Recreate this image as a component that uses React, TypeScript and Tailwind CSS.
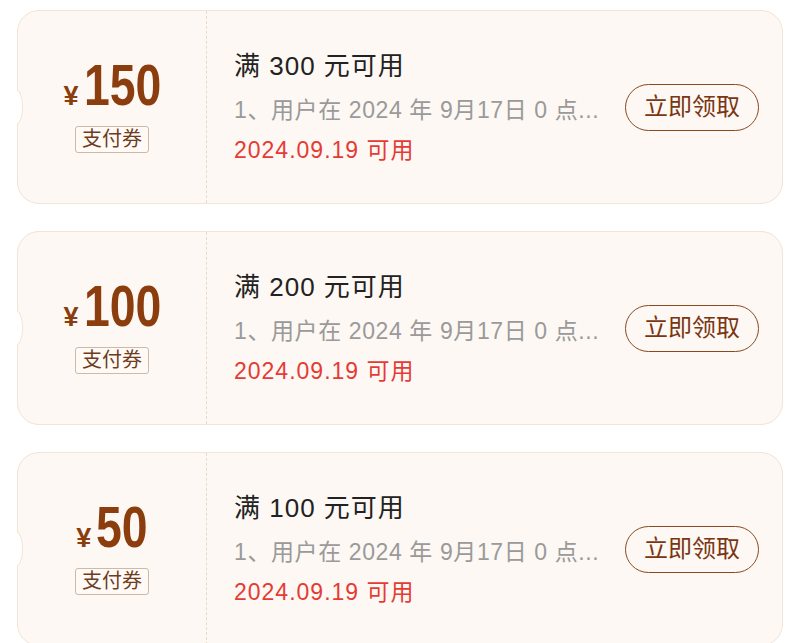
import React from 'react'

interface Coupon {
  amount: string
  threshold: string
}

const coupons: Coupon[] = [
  { amount: '150', threshold: '300' },
  { amount: '100', threshold: '200' },
  { amount: '50', threshold: '100' },
]

const font = 'font-["Liberation_Sans","Noto_Sans_CJK_SC",sans-serif]'

const CouponCard: React.FC<{ coupon: Coupon }> = ({ coupon }) => {
  const narrow = coupon.amount.length === 2
  return (
    <div className="relative flex h-[194px] shrink-0 rounded-[22px] border border-[#f2e4d6] bg-[#fdf8f3]">
      {/* Left notch */}
      <div className="absolute left-[-1px] top-1/2 h-[34px] w-[6px] -translate-y-1/2 rounded-tr-[6px_17px] rounded-br-[6px_17px] border border-l-0 border-[#f2e4d6] bg-white" />

      {/* Amount */}
      <div className="flex w-[188px] shrink-0 flex-col items-center justify-center pb-[6px]">
        <div className="flex items-baseline text-[#8b3d0e]">
          <span className="mr-[5px] text-[27px] font-bold leading-none">¥</span>
          <span
            className={`inline-block origin-left scale-x-[0.8] text-[58px] font-bold leading-none ${
              narrow ? 'mr-[-13px]' : 'mr-[-20px]'
            }`}
          >
            {coupon.amount}
          </span>
        </div>
        <span className="mt-[12px] rounded-[3px] border border-[#cdb9a6] bg-[#fffaf6] px-[6px] text-[20px] leading-[25px] text-[#6e3d1e]">
          支付券
        </span>
      </div>

      {/* Divider */}
      <div className="border-l border-dashed border-[#e9d9c7]" />

      {/* Details */}
      <div className="flex flex-1 items-center pl-[27px] pr-[23px]">
        <div className="flex-1 min-w-0">
          <p className="text-[26px] leading-[34px] tracking-[1px] text-[#222]">
            满 {coupon.threshold} 元可用
          </p>
          <p className="mt-[11px] whitespace-nowrap text-[23px] leading-[32px] tracking-[0.6px] text-[#9a9a9a]">
            1、用户在 2024 年 9月17日 0 点...
          </p>
          <p className="mt-[8px] text-[23px] leading-[32px] tracking-[1px] text-[#e53b35]">
            2024.09.19 可用
          </p>
        </div>
        <button
          type="button"
          className="flex h-[47px] w-[134px] shrink-0 items-center justify-center rounded-full border-[1.5px] border-[#8a4a20] text-[24px] text-[#7a3612]"
        >
          立即领取
        </button>
      </div>
    </div>
  )
}

export default function App() {
  return (
    <div className={`flex h-[643px] flex-col gap-[27px] overflow-hidden bg-white px-[17px] pt-[10px] ${font}`}>
      {coupons.map(c => (
        <CouponCard key={c.amount} coupon={c} />
      ))}
    </div>
  )
}
